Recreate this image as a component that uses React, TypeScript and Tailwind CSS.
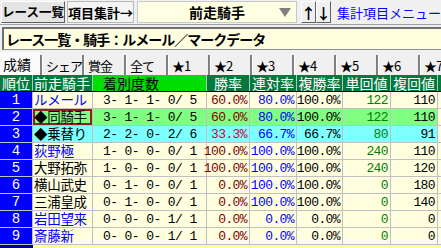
import React from "react";

const JP = { fontFamily: '"Noto Sans CJK JP", "Noto Sans", sans-serif' };
const MONO = { fontFamily: '"Liberation Mono", "DejaVu Sans Mono", monospace' };

type Row = {
  rank: string;
  name: string;
  nameColor: string;
  counts: string;
  win: string;
  ren: string;
  fuku: string;
  tan: string;
  fkai: string;
  bg: string;
  winColor?: string;
  selected?: boolean;
};

const rows: Row[] = [
  { rank: "1", name: "ルメール", nameColor: "text-[#0000ff]", counts: "3- 1- 1- 0/ 5", win: "60.0%", ren: "80.0%", fuku: "100.0%", tan: "122", fkai: "110", bg: "bg-[#ffffe0]" },
  { rank: "2", name: "◆同騎手", nameColor: "text-black", counts: "3- 1- 1- 0/ 5", win: "60.0%", ren: "80.0%", fuku: "100.0%", tan: "122", fkai: "110", bg: "bg-[#80ff80]", selected: true },
  { rank: "3", name: "◆乗替り", nameColor: "text-black", counts: "2- 2- 0- 2/ 6", win: "33.3%", ren: "66.7%", fuku: "66.7%", tan: "80", fkai: "91", bg: "bg-[#80ffff]", winColor: "text-[#d00040]" },
  { rank: "4", name: "荻野極", nameColor: "text-[#0000ff]", counts: "1- 0- 0- 0/ 1", win: "100.0%", ren: "100.0%", fuku: "100.0%", tan: "240", fkai: "110", bg: "bg-[#ffffe0]" },
  { rank: "5", name: "大野拓弥", nameColor: "text-black", counts: "1- 0- 0- 0/ 1", win: "100.0%", ren: "100.0%", fuku: "100.0%", tan: "240", fkai: "120", bg: "bg-[#ffffe0]" },
  { rank: "6", name: "横山武史", nameColor: "text-black", counts: "0- 1- 0- 0/ 1", win: "0.0%", ren: "100.0%", fuku: "100.0%", tan: "0", fkai: "180", bg: "bg-[#ffffe0]" },
  { rank: "7", name: "三浦皇成", nameColor: "text-black", counts: "0- 1- 0- 0/ 1", win: "0.0%", ren: "100.0%", fuku: "100.0%", tan: "0", fkai: "140", bg: "bg-[#ffffe0]" },
  { rank: "8", name: "岩田望来", nameColor: "text-[#0000ff]", counts: "0- 0- 0- 1/ 1", win: "0.0%", ren: "0.0%", fuku: "0.0%", tan: "0", fkai: "0", bg: "bg-[#ffffe0]" },
  { rank: "9", name: "斎藤新", nameColor: "text-[#0000ff]", counts: "0- 0- 0- 1/ 1", win: "0.0%", ren: "0.0%", fuku: "0.0%", tan: "0", fkai: "0", bg: "bg-[#ffffe0]" },
];

const tabs = ["シェア", "賞金", "全て", "★1", "★2", "★3", "★4", "★5", "★6", "★7"];

function NumCell({ w, text, color }: { w: string; text: string; color: string }) {
  return (
    <div
      className={`${w} shrink-0 h-full flex items-center justify-end pr-[2px] border-r border-[#c0c0c0] whitespace-pre text-[13px] tracking-[-0.6px] ${color}`}
      style={MONO}
    >
      {text}
    </div>
  );
}

export default function App() {
  return (
    <div className="w-[441px] h-[248px] overflow-hidden bg-[#f0f0f0] text-black leading-none" style={JP}>
      {/* top bar */}
      <div className="h-[25px] flex items-start pt-[1px] pl-[1px] border-b border-[#a0a0a0] whitespace-nowrap">
        <div className="w-[71px] h-[22px] flex items-center justify-center bg-[#e4e4e4] border border-t-white border-l-white border-r-[#606060] border-b-[#606060] text-[12.5px] font-bold">
          レース一覧
        </div>
        <div className="ml-[2px] w-[78px] h-[22px] flex items-center justify-center bg-[#f4f4f4] border border-[#b8b8b8] text-[13px] font-bold">
          項目集計→
        </div>
        <div className="ml-[3px] w-[188px] h-[22px] relative flex items-center justify-center bg-[#ffffe4] border border-[#c8c8c8] text-[14px] font-bold">
          前走騎手
          <span className="absolute right-[5px] top-[6px] w-0 h-0 border-l-[6px] border-r-[6px] border-t-[9px] border-l-transparent border-r-transparent border-t-[#808080]" />
        </div>
        <div className="ml-[4px] w-[15px] h-[22px] flex items-center justify-center bg-[#f0f0f0] border border-t-white border-l-white border-r-[#606060] border-b-[#606060] text-[15px] font-bold">
          ↑
        </div>
        <div className="w-[15px] h-[22px] flex items-center justify-center bg-[#f0f0f0] border border-t-white border-l-white border-r-[#606060] border-b-[#606060] text-[15px] font-bold">
          ↓
        </div>
        <div className="ml-[6px] h-[22px] flex items-center text-[13px] text-[#0000ff]">
          集計項目メニュー
        </div>
      </div>

      {/* title */}
      <div className="mt-[2px] ml-[2px] h-[23px] flex items-center bg-[#ffffe0] border-t-2 border-l-2 border-t-[#707070] border-l-[#707070] border-b border-b-[#909090] pl-[2px] text-[14px] font-bold tracking-[-1px] whitespace-nowrap">
        レース一覧・騎手：ルメール／マークデータ
      </div>

      {/* tabs */}
      <div className="mt-[2px] h-[23px] flex items-end whitespace-nowrap">
        <div className="w-[40px] shrink-0 h-[23px] flex items-center pl-[3px] bg-[#fafafa] text-[14px]">成績</div>
        {tabs.map((t) => (
          <div
            key={t}
            className="w-[42px] shrink-0 h-[20px] flex items-center bg-[#f0f0f0] border-l-2 border-l-[#808080]"
          >
            <span className="h-full flex items-center pl-[3px] border-l border-l-white text-[13px] tracking-[-1px]">{t}</span>
          </div>
        ))}
      </div>

      {/* table */}
      <div className="w-[441px]">
        {/* header */}
        <div className="h-[17px] flex bg-[#007a3d] text-white text-[14px] border-b border-black whitespace-nowrap">
          <div className="w-[33px] shrink-0 flex items-center justify-center border-r border-[#c0c0c0]">順位</div>
          <div className="w-[60px] shrink-0 flex items-center pl-[1px] border-r border-[#c0c0c0]">前走騎手</div>
          <div className="w-[114px] shrink-0 flex items-center pl-[10px] bg-[#00dd00] text-black border-r border-[#c0c0c0]">着別度数</div>
          <div className="w-[43px] shrink-0 flex items-center justify-center border-r border-[#c0c0c0]">勝率</div>
          <div className="w-[47px] shrink-0 flex items-center justify-center border-r border-[#c0c0c0]">連対率</div>
          <div className="w-[46px] shrink-0 flex items-center justify-center border-r border-[#c0c0c0]">複勝率</div>
          <div className="w-[48px] shrink-0 flex items-center justify-center border-r border-[#c0c0c0]">単回値</div>
          <div className="w-[47px] shrink-0 flex items-center justify-center border-r border-[#c0c0c0]">複回値</div>
          <div className="flex-1" />
        </div>
        {rows.map((r) => (
          <div key={r.rank} className={`h-[17px] flex border-b border-[#c0c0c0] ${r.bg} whitespace-nowrap`}>
            <div className="w-[33px] shrink-0 h-full flex items-center justify-center bg-[#0000ff] text-white text-[14px] border-r border-[#c0c0c0]" style={MONO}>
              {r.rank}
            </div>
            <div
              className={`w-[60px] shrink-0 h-full flex items-center pl-[1px] text-[13.5px] tracking-[-0.3px] border-r border-[#c0c0c0] ${r.nameColor} ${r.selected ? "shadow-[inset_0_0_0_2px_#902020]" : ""}`}
            >
              {r.name}
            </div>
            <div className="w-[114px] shrink-0 h-full flex items-center pl-[10px] whitespace-pre text-[13px] tracking-[-0.6px] border-r border-[#c0c0c0]" style={MONO}>
              {r.counts}
            </div>
            <NumCell w="w-[43px]" text={r.win} color={r.winColor ?? "text-[#800000]"} />
            <NumCell w="w-[47px]" text={r.ren} color="text-[#0000ff]" />
            <NumCell w="w-[46px]" text={r.fuku} color="text-black" />
            <NumCell w="w-[48px]" text={r.tan} color="text-[#008000]" />
            <NumCell w="w-[47px]" text={r.fkai} color="text-black" />
            <div className="flex-1 bg-[#ffffe0]" />
          </div>
        ))}
        <div className="h-[17px] flex bg-[#ffff99]">
          <div className="w-[33px] shrink-0 bg-[#000080]" />
        </div>
      </div>
    </div>
  );
}
